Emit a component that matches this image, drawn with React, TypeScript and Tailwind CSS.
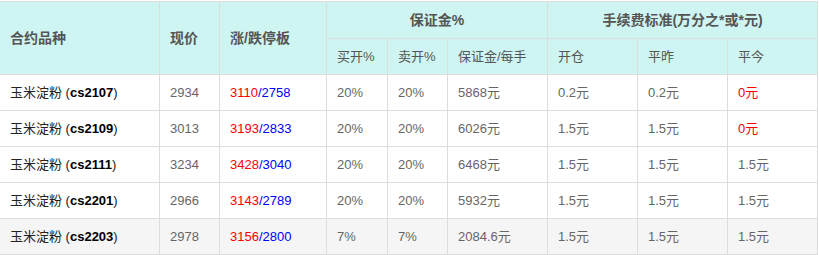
import React from "react";

type Row = {
  code: string;
  price: string;
  up: string;
  down: string;
  buy: string;
  sell: string;
  margin: string;
  open: string;
  closeY: string;
  closeT: string;
  closeTRed?: boolean;
};

const rows: Row[] = [
  { code: "cs2107", price: "2934", up: "3110", down: "2758", buy: "20%", sell: "20%", margin: "5868元", open: "0.2元", closeY: "0.2元", closeT: "0元", closeTRed: true },
  { code: "cs2109", price: "3013", up: "3193", down: "2833", buy: "20%", sell: "20%", margin: "6026元", open: "1.5元", closeY: "1.5元", closeT: "0元", closeTRed: true },
  { code: "cs2111", price: "3234", up: "3428", down: "3040", buy: "20%", sell: "20%", margin: "6468元", open: "1.5元", closeY: "1.5元", closeT: "1.5元" },
  { code: "cs2201", price: "2966", up: "3143", down: "2789", buy: "20%", sell: "20%", margin: "5932元", open: "1.5元", closeY: "1.5元", closeT: "1.5元" },
  { code: "cs2203", price: "2978", up: "3156", down: "2800", buy: "7%", sell: "7%", margin: "2084.6元", open: "1.5元", closeY: "1.5元", closeT: "1.5元" },
];

const font = { fontFamily: '"Liberation Sans", "Noto Sans CJK SC", sans-serif' };

export default function App() {
  const th = "border border-[#dddddd] bg-[#cff5f2] text-[#555555] font-bold text-[14px] text-left pl-[10px] p-0";
  const th2 = "border border-[#dddddd] bg-[#cff5f2] text-[#555555] font-normal text-[13px] text-left pl-[10px] p-0 h-[36px]";
  const td = "border border-[#dddddd] text-[#666666] text-[13px] pl-[10px] p-0 h-[36px]";
  return (
    <div className="w-[819px] h-[255px] bg-white pt-px" style={font}>
      <table className="table-fixed border-collapse w-[818px] -ml-px">
        <colgroup>
          <col className="w-[160px]" />
          <col className="w-[60px]" />
          <col className="w-[107px]" />
          <col className="w-[61px]" />
          <col className="w-[60px]" />
          <col className="w-[100px]" />
          <col className="w-[90px]" />
          <col className="w-[90px]" />
          <col className="w-[90px]" />
        </colgroup>
        <thead>
          <tr className="h-[37px]">
            <th rowSpan={2} className={th}>合约品种</th>
            <th rowSpan={2} className={th}>现价</th>
            <th rowSpan={2} className={th}>涨/跌停板</th>
            <th colSpan={3} className={th + " !text-center !pl-0"}>保证金%</th>
            <th colSpan={3} className={th + " !text-center !pl-0"}>手续费标准(万分之*或*元)</th>
          </tr>
          <tr>
            <th className={th2}>买开%</th>
            <th className={th2}>卖开%</th>
            <th className={th2}>保证金/每手</th>
            <th className={th2}>开仓</th>
            <th className={th2}>平昨</th>
            <th className={th2}>平今</th>
          </tr>
        </thead>
        <tbody>
          {rows.map((r, i) => (
            <tr key={r.code} className={i === rows.length - 1 ? "bg-[#f5f5f5]" : "bg-white"}>
              <td className={td + " !text-[#222222]"}>
                玉米淀粉 (<span className="font-bold text-black">{r.code}</span>)
              </td>
              <td className={td}>{r.price}</td>
              <td className={td}>
                <span className="text-[#ff0000]">{r.up}</span>
                <span className="text-[#0000ff]">/</span>
                <span className="text-[#0000ff]">{r.down}</span>
              </td>
              <td className={td}>{r.buy}</td>
              <td className={td}>{r.sell}</td>
              <td className={td}>{r.margin}</td>
              <td className={td}>{r.open}</td>
              <td className={td}>{r.closeY}</td>
              <td className={td + (r.closeTRed ? " !text-[#ff0000]" : "")}>{r.closeT}</td>
            </tr>
          ))}
        </tbody>
      </table>
    </div>
  );
}
